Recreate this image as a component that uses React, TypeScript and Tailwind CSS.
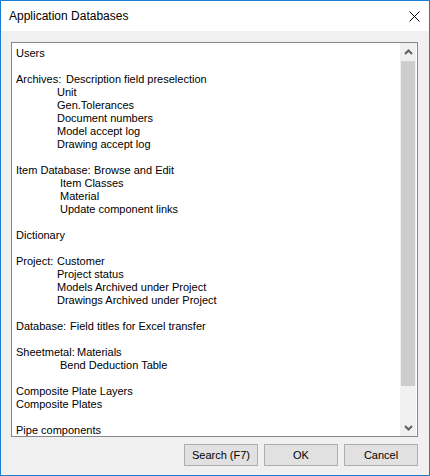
import React from "react";

type Line = { text?: string; label?: string; labelW?: string; pad?: string };

const lines: Line[] = [
  { text: "Users" },
  {},
  { label: "Archives:", labelW: "w-[50px]", text: "Description field preselection" },
  { text: "Unit", pad: "pl-[41px]" },
  { text: "Gen.Tolerances", pad: "pl-[41px]" },
  { text: "Document numbers", pad: "pl-[41px]" },
  { text: "Model accept log", pad: "pl-[41px]" },
  { text: "Drawing accept log", pad: "pl-[41px]" },
  {},
  { label: "Item Database:", labelW: "w-[78px]", text: "Browse and Edit" },
  { text: "Item Classes", pad: "pl-[44px]" },
  { text: "Material", pad: "pl-[44px]" },
  { text: "Update component links", pad: "pl-[44px]" },
  {},
  { text: "Dictionary" },
  {},
  { label: "Project:", labelW: "w-[41px]", text: "Customer" },
  { text: "Project status", pad: "pl-[41px]" },
  { text: "Models Archived under Project", pad: "pl-[41px]" },
  { text: "Drawings Archived under Project", pad: "pl-[41px]" },
  {},
  { label: "Database:", labelW: "w-[54px]", text: "Field titles for Excel transfer" },
  {},
  { label: "Sheetmetal:", labelW: "w-[61px]", text: "Materials" },
  { text: "Bend Deduction Table", pad: "pl-[44px]" },
  {},
  { text: "Composite Plate Layers" },
  { text: "Composite Plates" },
  {},
  { text: "Pipe components" },
];

function Chevron({ up }: { up?: boolean }) {
  return (
    <svg width="9" height="6" viewBox="0 0 9 6" className="block">
      <path
        d={up ? "M1 5 L4.5 1.5 L8 5" : "M1 1 L4.5 4.5 L8 1"}
        fill="none"
        stroke="#606060"
        strokeWidth="2"
      />
    </svg>
  );
}

function Btn({ children }: { children: React.ReactNode }) {
  return (
    <div className="w-[74px] h-[22px] border border-[#adadad] bg-[#e1e1e1] flex items-center justify-center text-[11px] text-black leading-none">
      {children}
    </div>
  );
}

export default function App() {
  return (
    <div
      className="w-[430px] h-[476px] border border-[#1a7fd4] bg-[#f0f0f0] flex flex-col overflow-hidden"
      style={{ fontFamily: '"Liberation Sans", Arial, sans-serif' }}
    >
      <div className="h-[30px] bg-white flex items-center justify-between shrink-0">
        <div className="pl-[8px] text-[12px] text-black">Application Databases</div>
        <svg width="11" height="11" viewBox="0 0 11 11" className="mr-[9px]">
          <path d="M0.5 0.5 L10.5 10.5 M10.5 0.5 L0.5 10.5" stroke="#000" strokeWidth="1" />
        </svg>
      </div>
      <div className="flex flex-col pl-[10px] pr-[11px] pt-[11px]">
        <div className="h-[395px] border border-[#828790] bg-white flex">
          <div className="flex-1 pl-[4px] pt-[4px] text-[11px] text-black">
            {lines.map((l, i) => (
              <div key={i} className={`h-[13px] leading-[13px] flex whitespace-nowrap ${l.pad ?? ""}`}>
                {l.label && <span className={`${l.labelW} shrink-0`}>{l.label}</span>}
                {l.text && <span>{l.text}</span>}
              </div>
            ))}
          </div>
          <div className="w-[16px] mr-[1px] flex flex-col bg-[#f0f0f0]">
            <div className="h-[18px] flex items-center justify-center">
              <Chevron up />
            </div>
            <div className="h-[325px] mx-[1px] bg-[#cdcdcd]" />
            <div className="flex-1" />
            <div className="h-[17px] flex items-center justify-center">
              <Chevron />
            </div>
          </div>
        </div>
        <div className="flex justify-end gap-[6px] mt-[7px] pr-0">
          <Btn>Search (F7)</Btn>
          <Btn>OK</Btn>
          <Btn>Cancel</Btn>
        </div>
      </div>
    </div>
  );
}
